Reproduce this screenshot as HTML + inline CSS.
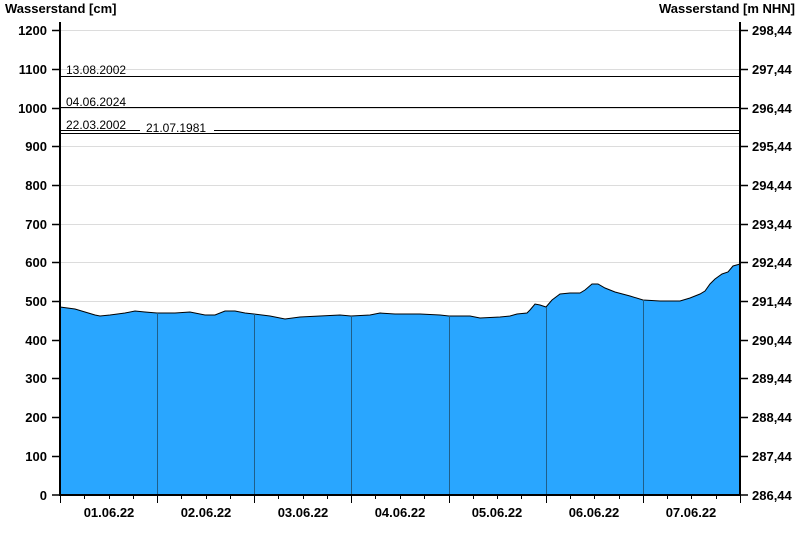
<!DOCTYPE html>
<html><head><meta charset="utf-8"><style>
html,body{margin:0;padding:0;background:#fff;}
svg{display:block;font-family:"Liberation Sans",Arial,sans-serif;}
</style></head><body>
<svg width="800" height="550" viewBox="0 0 800 550">
<g stroke="#dcdcdc" stroke-width="1">
<line x1="60" x2="740" y1="30.5" y2="30.5"/><line x1="60" x2="740" y1="69.5" y2="69.5"/><line x1="60" x2="740" y1="108.5" y2="108.5"/><line x1="60" x2="740" y1="146.5" y2="146.5"/><line x1="60" x2="740" y1="185.5" y2="185.5"/><line x1="60" x2="740" y1="224.5" y2="224.5"/><line x1="60" x2="740" y1="262.5" y2="262.5"/><line x1="60" x2="740" y1="301.5" y2="301.5"/><line x1="60" x2="740" y1="340.5" y2="340.5"/><line x1="60" x2="740" y1="378.5" y2="378.5"/><line x1="60" x2="740" y1="417.5" y2="417.5"/><line x1="60" x2="740" y1="456.5" y2="456.5"/>
</g>
<polygon fill="#29a6ff" stroke="#000" stroke-width="1" points="60,307 75,309 85,312 95,315 100,316 110,315 125,313 135,311 145,312 157,313 175,313 190,312 205,315 215,315 225,311 235,311 245,313 254,314 270,316 285,319 300,317 320,316 340,315 351,316 370,315 380,313 395,314 420,314 440,315 449,316 470,316 480,318 500,317 510,316 517,314 527,313 530,310 535,304 540,305 546,307 552,300 560,294 570,293 580,293 585,290 592,284 598,284 605,288 615,292 630,296 643,300 660,301 680,301 690,298 700,294 705,291 710,284 715,279 722,274 728,272 733,266 740,264 740,495 60,495"/>
<g stroke="#1f5f8a" stroke-width="1">
<line x1="157.5" x2="157.5" y1="313" y2="495"/><line x1="254.5" x2="254.5" y1="314" y2="495"/><line x1="351.5" x2="351.5" y1="316" y2="495"/><line x1="449.5" x2="449.5" y1="316" y2="495"/><line x1="546.5" x2="546.5" y1="307" y2="495"/><line x1="643.5" x2="643.5" y1="300" y2="495"/>
</g>
<g stroke="#000" stroke-width="1">
<line x1="60" x2="740" y1="76.5" y2="76.5"/>
<line x1="60" x2="740" y1="107.5" y2="107.5"/>
<line x1="60" x2="140" y1="130.5" y2="130.5"/><line x1="214" x2="740" y1="130.5" y2="130.5"/>
<line x1="60" x2="740" y1="133.5" y2="133.5"/>
</g>
<g font-size="12" fill="#000">
<text x="66" y="74">13.08.2002</text>
<text x="66" y="106">04.06.2024</text>
<text x="66" y="129">22.03.2002</text>
<text x="146" y="132">21.07.1981</text>
</g>
<g stroke="#000" stroke-width="2">
<line x1="60" x2="60" y1="22" y2="496"/><line x1="740" x2="740" y1="22" y2="496"/><line x1="59" x2="741" y1="495" y2="495"/>
</g>
<g stroke="#000" stroke-width="1.5">
<path d="M52 30.5H60M52 69.5H60M52 108.5H60M52 146.5H60M52 185.5H60M52 224.5H60M52 262.5H60M52 301.5H60M52 340.5H60M52 378.5H60M52 417.5H60M52 456.5H60M52 495H60"/>
<path d="M740 30.5H748M740 69.5H748M740 108.5H748M740 146.5H748M740 185.5H748M740 224.5H748M740 262.5H748M740 301.5H748M740 340.5H748M740 378.5H748M740 417.5H748M740 456.5H748M740 495H748"/>
</g>
<g stroke="#000" stroke-width="1">
<path d="M60.5 495V503M157.5 495V503M254.5 495V503M351.5 495V503M449.5 495V503M546.5 495V503M643.5 495V503M740.5 495V503"/>
<path d="M84.5 495V499M109.5 495V499M133.5 495V499M181.5 495V499M206.5 495V499M230.5 495V499M278.5 495V499M303.5 495V499M327.5 495V499M375.5 495V499M400.5 495V499M424.5 495V499M473.5 495V499M497.5 495V499M521.5 495V499M570.5 495V499M594.5 495V499M619.5 495V499M667.5 495V499M691.5 495V499M716.5 495V499"/>
</g>
<g font-size="13" font-weight="bold" fill="#000">
<text x="5" y="13">Wasserstand [cm]</text>
<text x="795" y="13" text-anchor="end">Wasserstand [m NHN]</text>
</g>
<g font-size="13" font-weight="bold" fill="#000" text-anchor="end">
<text x="47" y="35">1200</text><text x="47" y="74">1100</text><text x="47" y="113">1000</text><text x="47" y="151">900</text><text x="47" y="190">800</text><text x="47" y="229">700</text><text x="47" y="267">600</text><text x="47" y="306">500</text><text x="47" y="345">400</text><text x="47" y="383">300</text><text x="47" y="422">200</text><text x="47" y="461">100</text><text x="47" y="500">0</text>
</g>
<g font-size="13" font-weight="bold" fill="#000">
<text x="752" y="35">298,44</text><text x="752" y="74">297,44</text><text x="752" y="113">296,44</text><text x="752" y="151">295,44</text><text x="752" y="190">294,44</text><text x="752" y="229">293,44</text><text x="752" y="267">292,44</text><text x="752" y="306">291,44</text><text x="752" y="345">290,44</text><text x="752" y="383">289,44</text><text x="752" y="422">288,44</text><text x="752" y="461">287,44</text><text x="752" y="500">286,44</text>
</g>
<g font-size="13" font-weight="bold" fill="#000" text-anchor="middle">
<text x="109" y="517">01.06.22</text><text x="206" y="517">02.06.22</text><text x="303" y="517">03.06.22</text><text x="400" y="517">04.06.22</text><text x="497" y="517">05.06.22</text><text x="594" y="517">06.06.22</text><text x="691" y="517">07.06.22</text>
</g>
</svg>
</body></html>
